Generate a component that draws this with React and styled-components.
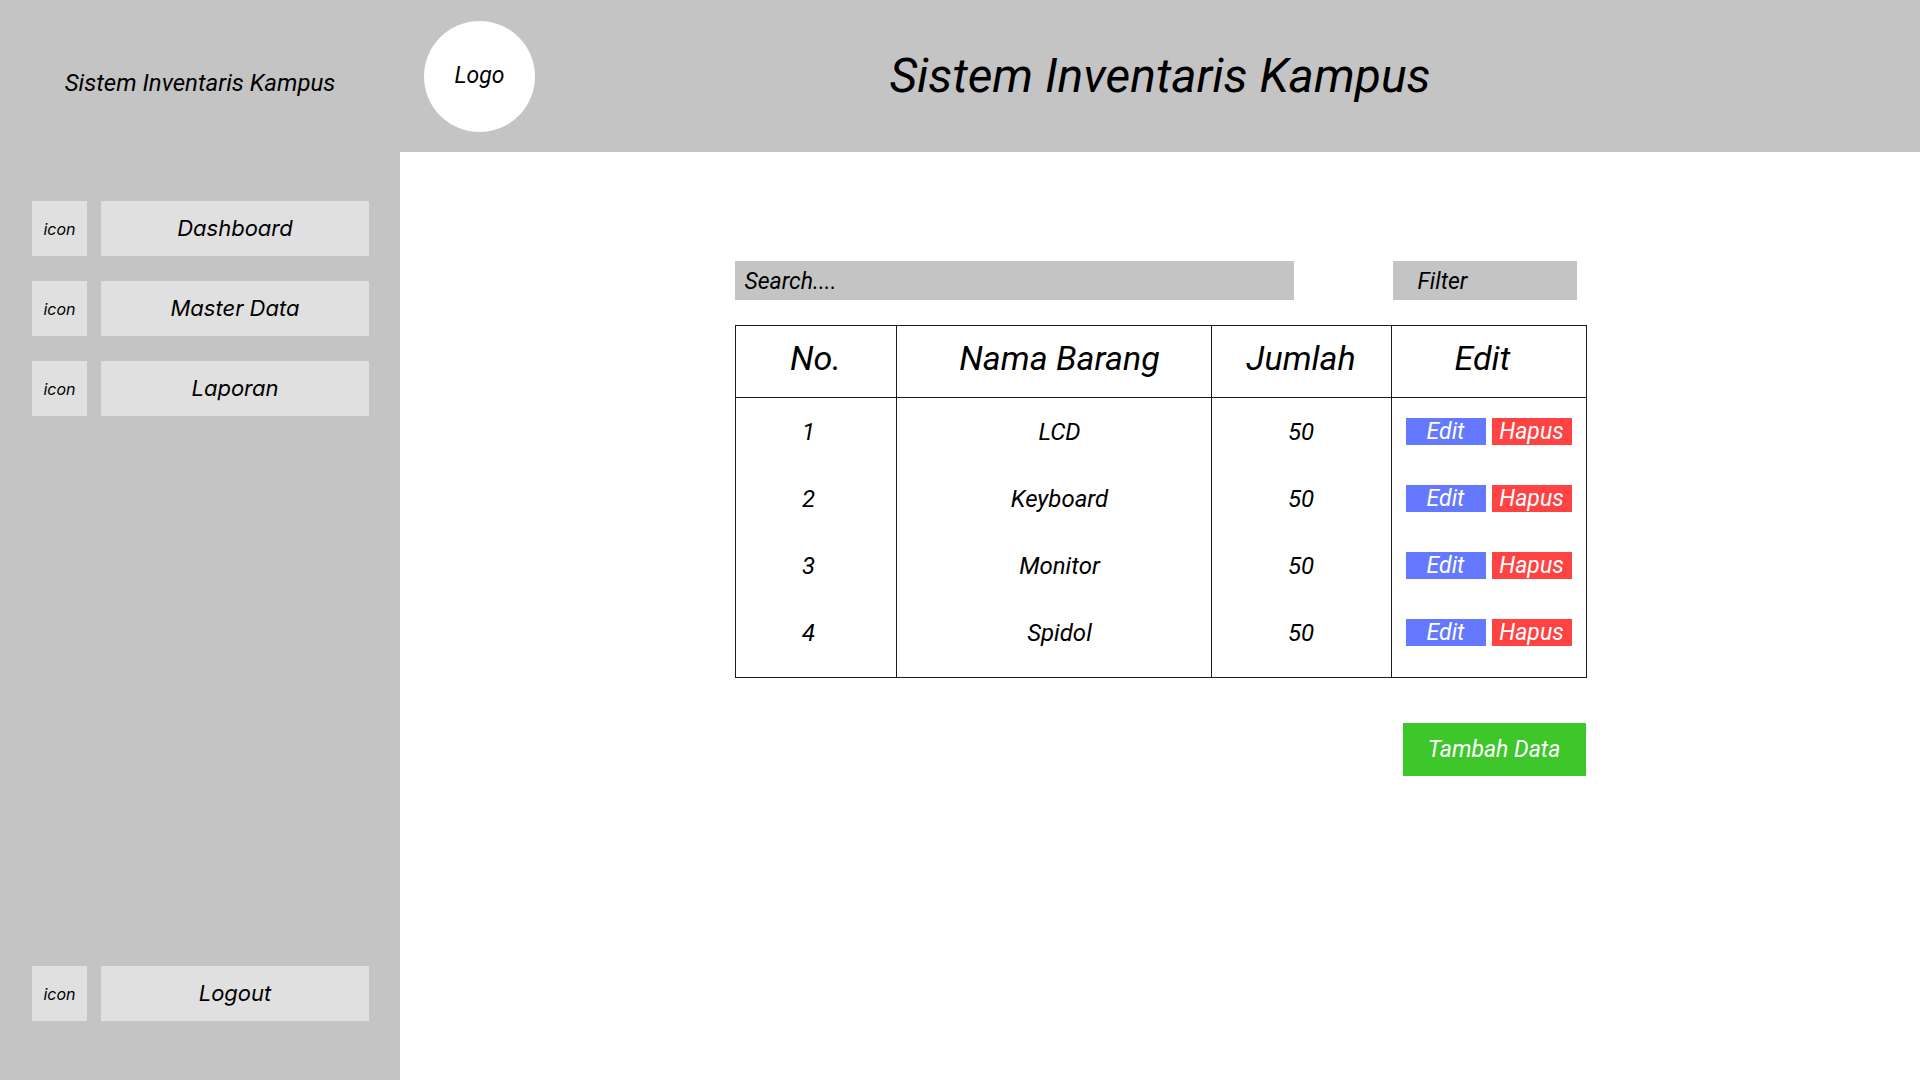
import React from "react";
import styled, { createGlobalStyle } from "styled-components";

const GlobalStyle = createGlobalStyle`
  html, body {
    margin: 0;
    padding: 0;
    background: #ffffff;
  }
  body {
    font-family: Roboto, "Liberation Sans", sans-serif;
    font-style: italic;
    color: #000;
  }
`;

const items = [
  { no: 1, nama: "LCD", jumlah: 50 },
  { no: 2, nama: "Keyboard", jumlah: 50 },
  { no: 3, nama: "Monitor", jumlah: 50 },
  { no: 4, nama: "Spidol", jumlah: 50 },
];

const menu = ["Dashboard", "Master Data", "Laporan"];

const App = () => {
  return (
    <Page>
      <GlobalStyle />
      <Header>
        <Brand>Sistem Inventaris Kampus</Brand>
        <HeaderMain>
          <Logo>Logo</Logo>
          <Title>Sistem Inventaris Kampus</Title>
          <span />
        </HeaderMain>
      </Header>
      <Body>
        <Sidebar>
          <Menu>
            {menu.map((label) => (
              <MenuRow key={label}>
                <IconBox>icon</IconBox>
                <MenuButton>{label}</MenuButton>
              </MenuRow>
            ))}
          </Menu>
          <MenuRow>
            <IconBox>icon</IconBox>
            <MenuButton>Logout</MenuButton>
          </MenuRow>
        </Sidebar>
        <Main>
          <Content>
            <Toolbar>
              <SearchBox>Search....</SearchBox>
              <FilterBox>Filter</FilterBox>
            </Toolbar>
            <Table>
              <colgroup>
                <col style={{ width: 161 }} />
                <col style={{ width: 315 }} />
                <col style={{ width: 180 }} />
                <col style={{ width: 195 }} />
              </colgroup>
              <thead>
                <tr>
                  <Th>No.</Th>
                  <Th $padLeft={12}>Nama Barang</Th>
                  <Th>Jumlah</Th>
                  <Th $padRight={12}>Edit</Th>
                </tr>
              </thead>
              <tbody>
                {items.map((it) => (
                  <tr key={it.no}>
                    <Td $padRight={14}>{it.no}</Td>
                    <Td $padLeft={12}>{it.nama}</Td>
                    <Td>{it.jumlah}</Td>
                    <ActionCell>
                      <Actions>
                        <SmallButton $color="#6479ff">Edit</SmallButton>
                        <SmallButton $color="#ff4343">Hapus</SmallButton>
                      </Actions>
                    </ActionCell>
                  </tr>
                ))}
              </tbody>
            </Table>
            <Footer>
              <AddButton>Tambah Data</AddButton>
            </Footer>
          </Content>
        </Main>
      </Body>
    </Page>
  );
};

const Page = styled.div`
  width: 1920px;
  height: 1080px;
  display: flex;
  flex-direction: column;
  overflow: hidden;
`;

const Header = styled.header`
  height: 152px;
  background: #c4c4c4;
  display: grid;
  grid-template-columns: 400px 1fr;
`;

const Brand = styled.div`
  display: flex;
  align-items: center;
  justify-content: center;
  padding-top: 14px;
  font-size: 24px;
`;

const HeaderMain = styled.div`
  display: grid;
  grid-template-columns: 1fr auto 1fr;
  align-items: center;
`;

const Logo = styled.div`
  width: 111px;
  height: 111px;
  margin-left: 24px;
  border-radius: 50%;
  background: #ffffff;
  display: flex;
  align-items: center;
  justify-content: center;
  font-size: 23px;
  justify-self: start;
  padding-bottom: 2px;
  box-sizing: border-box;
`;

const Title = styled.h1`
  margin: 0;
  font-size: 48px;
  font-weight: 400;
  font-style: italic;
  padding-bottom: 2px;
`;

const Body = styled.div`
  flex: 1;
  display: flex;
`;

const Sidebar = styled.aside`
  width: 400px;
  background: #c4c4c4;
  display: flex;
  flex-direction: column;
  justify-content: space-between;
  padding: 49px 0 59px 32px;
  box-sizing: border-box;
`;

const Menu = styled.nav`
  display: flex;
  flex-direction: column;
  gap: 25px;
`;

const MenuRow = styled.div`
  display: flex;
  gap: 14px;
  font-family: Inter, "Liberation Sans", sans-serif;
`;

const IconBox = styled.div`
  width: 55px;
  height: 55px;
  background: #e0e0e0;
  display: flex;
  align-items: center;
  justify-content: center;
  font-size: 16px;
`;

const MenuButton = styled.div`
  width: 268px;
  height: 55px;
  background: #e0e0e0;
  display: flex;
  align-items: center;
  justify-content: center;
  font-size: 22px;
  padding-bottom: 2px;
  box-sizing: border-box;
`;

const Main = styled.main`
  flex: 1;
  background: #ffffff;
  padding-top: 109px;
`;

const Content = styled.div`
  width: 851px;
  margin: 0 auto;
`;

const Toolbar = styled.div`
  display: flex;
  justify-content: space-between;
  padding-right: 9px;
  margin-bottom: 25px;
`;

const Field = styled.div`
  height: 39px;
  background: #c4c4c4;
  display: flex;
  align-items: center;
  font-size: 23px;
  box-sizing: border-box;
  padding-top: 2px;
`;

const SearchBox = styled(Field)`
  width: 559px;
  padding-left: 10px;
`;

const FilterBox = styled(Field)`
  width: 184px;
  padding-left: 25px;
`;

const Table = styled.table`
  width: 851px;
  border-collapse: collapse;
  table-layout: fixed;
  border: 1.5px solid #1a1a1a;

  tbody tr:last-child td {
    padding-bottom: 11px;
  }
`;

const Th = styled.th`
  height: 72px;
  padding: 0 ${(p) => p.$padRight || 0}px 8px ${(p) => p.$padLeft || 0}px;
  border: 1.5px solid #1a1a1a;
  font-size: 34px;
  font-weight: 400;
  font-style: italic;
  text-align: center;
  vertical-align: middle;
  box-sizing: border-box;
`;

const Td = styled.td`
  height: 67px;
  padding: 0 ${(p) => p.$padRight || 0}px 0 ${(p) => p.$padLeft || 0}px;
  border-left: 1.5px solid #1a1a1a;
  border-right: 1.5px solid #1a1a1a;
  font-size: 24px;
  text-align: center;
  vertical-align: middle;
`;

const ActionCell = styled(Td)`
  text-align: left;
  padding-left: 14px;
`;

const Actions = styled.div`
  display: flex;
  gap: 6px;
`;

const SmallButton = styled.button`
  width: 80px;
  height: 27px;
  border: none;
  padding: 0;
  background: ${(p) => p.$color};
  color: #ffffff;
  font-family: Roboto, "Liberation Sans", sans-serif;
  font-style: italic;
  font-size: 23px;
  line-height: 27px;
`;

const Footer = styled.div`
  display: flex;
  justify-content: flex-end;
  margin-top: 45px;
`;

const AddButton = styled.button`
  width: 183px;
  height: 53px;
  border: none;
  background: #3ec72a;
  color: #ffffff;
  font-family: Roboto, "Liberation Sans", sans-serif;
  font-style: italic;
  font-size: 23px;
`;

export default App;
